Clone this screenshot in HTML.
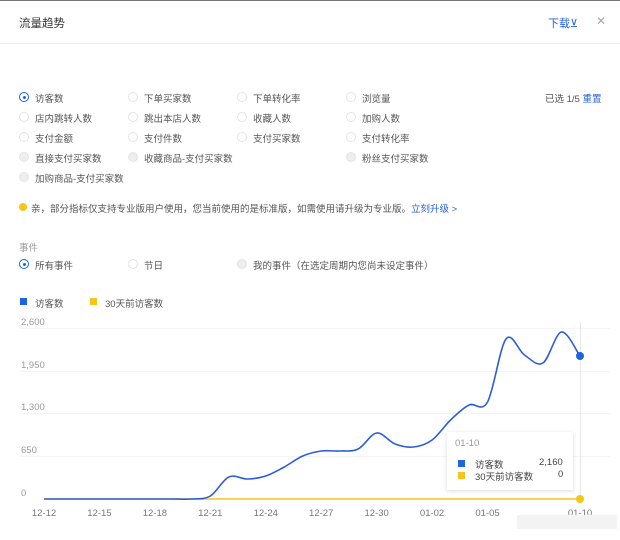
<!DOCTYPE html>
<html><head><meta charset="utf-8"><style>
*{margin:0;padding:0;box-sizing:border-box}
body{width:620px;height:540px;background:#fff;font-family:"Liberation Sans","Noto Sans CJK SC",sans-serif;font-size:9.5px;color:#555;position:relative;overflow:hidden}
.a{position:absolute;white-space:nowrap}
.r{position:absolute;width:10px;height:10px;border-radius:50%;border:1px solid #e4e4e4;background:#fff}
.r.d{background:#eee;border-color:#e4e4e4}
.r.on{border-color:#1d64e0}
.r.on:after{content:"";position:absolute;left:2.5px;top:2.5px;width:3px;height:3px;border-radius:50%;background:#1d64e0}
.blue{color:#2962d9}
.g{color:#999}
</style></head><body>
<div class="a" style="left:0;top:0;width:620px;height:1px;background:#777"></div>
<div class="a" style="left:19px;top:15px;font-size:11.5px;color:#333">流量趋势</div>
<div class="a blue" style="left:548px;top:15px;font-size:11px">下载⊻</div>
<div class="a" style="left:596px;top:14px;font-size:12px;color:#aaa">✕</div>
<div class="a" style="left:0;top:43px;width:620px;height:1px;background:#eee"></div>

<div id="opts"></div>
<div class="a" style="left:545px;top:91px;color:#555">已选 1/5 <span class="blue">重置</span></div>

<div class="a" style="left:19px;top:203px;width:8px;height:8px;border-radius:50%;background:#f5c518"></div>
<div class="a" style="left:31px;top:201px">亲，部分指标仅支持专业版用户使用，您当前使用的是标准版，如需使用请升级为专业版。<span class="blue">立刻升级 &gt;</span></div>
<div class="a g" style="left:19px;top:240px">事件</div>
<div class="r on" style="left:19px;top:259px"></div><div class="a" style="left:35px;top:258px">所有事件</div>
<div class="r" style="left:128px;top:259px"></div><div class="a" style="left:144px;top:258px">节日</div>
<div class="r d" style="left:237px;top:259px"></div><div class="a" style="left:253px;top:258px">我的事件（在选定周期内您尚未设定事件）</div>

<div class="a" style="left:20px;top:298px;width:7px;height:7px;background:#1d64e0"></div><div class="a" style="left:35px;top:296px">访客数</div>
<div class="a" style="left:90px;top:298px;width:7px;height:7px;background:#f5c518"></div><div class="a" style="left:105px;top:296px">30天前访客数</div>

<svg class="a" style="left:0;top:0" width="620" height="540" id="ch">
<g stroke="#f4f4f4" stroke-width="1">
<line x1="20" y1="328.5" x2="610" y2="328.5"/><line x1="20" y1="371.5" x2="610" y2="371.5"/><line x1="20" y1="413.5" x2="610" y2="413.5"/><line x1="20" y1="456.5" x2="610" y2="456.5"/></g>
<line x1="580.5" y1="322" x2="580.5" y2="499" stroke="#e8e8e8"/>
<g font-size="9.5" fill="#999" font-family="Liberation Sans,sans-serif">
<text x="21" y="325">2,600</text><text x="21" y="368">1,950</text><text x="21" y="410">1,300</text><text x="21" y="453">650</text><text x="21" y="496">0</text></g>
<g font-size="9.5" fill="#777" font-family="Liberation Sans,sans-serif" text-anchor="middle" id="xl"></g>
<line x1="44" y1="499" x2="580" y2="499" stroke="#f5c518" stroke-width="1.5"/>
<path id="bl" fill="none" stroke="#2a5fd6" stroke-width="1.6"/>
<circle cx="580" cy="356" r="4" fill="#1d64e0"/>
<circle cx="580" cy="499" r="4" fill="#f5c518"/>
<rect x="517" y="515" width="100" height="14" fill="#f3f3f3"/>
</svg>

<div class="a" style="left:447px;top:432px;width:126px;height:58px;background:#fff;box-shadow:0 1px 4px rgba(0,0,0,.15)"></div>
<div class="a g" style="left:455px;top:438px">01-10</div>
<div class="a" style="left:458px;top:460px;width:7px;height:7px;background:#1d64e0"></div>
<div class="a" style="left:475px;top:457px;color:#444">访客数</div><div class="a" style="left:539px;top:457px;color:#444">2,160</div>
<div class="a" style="left:458px;top:472px;width:7px;height:7px;background:#f5c518"></div>
<div class="a" style="left:475px;top:469px;color:#444">30天前访客数</div><div class="a" style="left:558px;top:469px;color:#444">0</div>

<script>
var rows=[[["访客数","on"],["下单买家数",""],["下单转化率",""],["浏览量",""]],
[["店内跳转人数",""],["跳出本店人数",""],["收藏人数",""],["加购人数",""]],
[["支付金额",""],["支付件数",""],["支付买家数",""],["支付转化率",""]],
[["直接支付买家数","d"],["收藏商品-支付买家数","d"],null,["粉丝支付买家数","d"]],
[["加购商品-支付买家数","d"]]];
var xs=[19,128,237,346],ys=[97,117,137,157,177],h="";
rows.forEach(function(r,i){r.forEach(function(o,j){if(!o)return;
h+='<div class="r '+o[1]+'" style="left:'+xs[j]+'px;top:'+(ys[i]-5)+'px"></div><div class="a" style="left:'+(xs[j]+16)+'px;top:'+(ys[i]-6)+'px">'+o[0]+'</div>';});});
document.getElementById('opts').innerHTML=h;
var lab=["12-12","12-15","12-18","12-21","12-24","12-27","12-30","01-02","01-05"],xl="";
lab.forEach(function(l,i){xl+='<text x="'+(44+i*3*18.48)+'" y="516">'+l+'</text>';});
xl+='<text x="580" y="516">01-10</text>';
document.getElementById('xl').innerHTML=xl;
var Y=[499,499,499,499,499,499,499,499,499,496,477,479,476,467,456,451,451,449,433,444,447,440,420,405,402,339,355,363,332,356];
var P=Y.map(function(y,i){return[44+i*18.48,y]});
var d="M"+P[0];
for(var i=0;i<P.length-1;i++){var p0=P[i-1]||P[i],p1=P[i],p2=P[i+1],p3=P[i+2]||p2;
d+=" C"+(p1[0]+(p2[0]-p0[0])/6)+","+(p1[1]+(p2[1]-p0[1])/6)+" "+(p2[0]-(p3[0]-p1[0])/6)+","+(p2[1]-(p3[1]-p1[1])/6)+" "+p2[0]+","+p2[1];}
document.getElementById('bl').setAttribute('d',d);
</script>
</body></html>
